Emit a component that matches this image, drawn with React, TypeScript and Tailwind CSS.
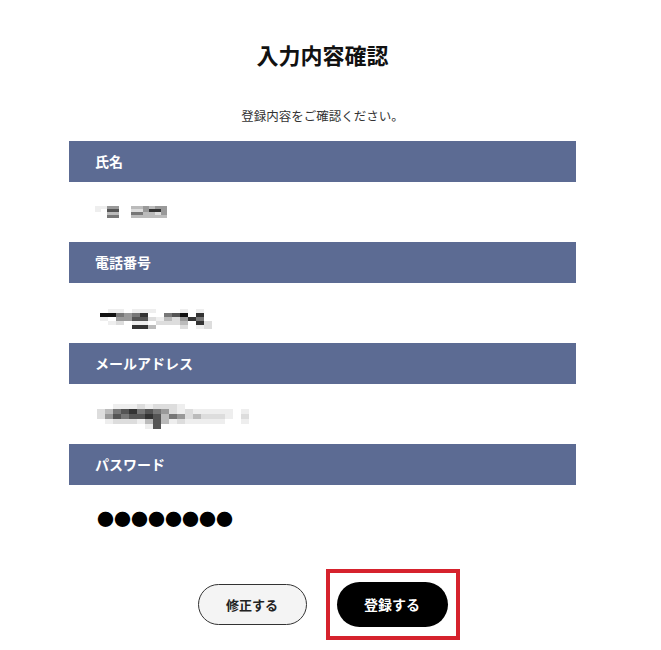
import React from "react";

const shades: Record<string, string> = {
  "0": "#ffffff",
  "1": "#eeeeee",
  "2": "#dddddd",
  "3": "#bbbbbb",
  "4": "#999999",
  "5": "#777777",
  "6": "#555555",
  "7": "#333333",
  "8": "#111111",
};

function Mosaic({ rows, cw, ch }: { rows: string[]; cw: number; ch: number }) {
  return (
    <div className="flex flex-col">
      {rows.map((r, i) => (
        <div key={i} className="flex">
          {r.split("").map((c, j) => (
            <div key={j} style={{ width: cw, height: ch, background: shades[c] }} />
          ))}
        </div>
      ))}
    </div>
  );
}

function Bar({ label }: { label: string }) {
  return (
    <div className="h-[41px] bg-[#5c6b93] flex items-center pl-[26px] text-white text-[14px] font-bold">
      {label}
    </div>
  );
}

export default function App() {
  return (
    <div
      className="w-[645px] bg-white text-[#222]"
      style={{ fontFamily: '"Noto Sans CJK JP", "Noto Sans", sans-serif' }}
    >
      <div className="flex flex-col items-center pt-[39px]">
        <h1 className="text-[22px] font-bold leading-[30px] text-[#111]">入力内容確認</h1>
        <p className="mt-[38px] text-[12.5px] leading-[18px] text-[#333]">登録内容をご確認ください。</p>
      </div>
      <div className="w-[507px] ml-[69px] mt-[16px]">
        <Bar label="氏名" />
        <div className="h-[60px] flex items-center pl-[26px]">
          <Mosaic cw={6} ch={3} rows={["114400334344", "106600224774", "003300553324", "005500333333"]} />
        </div>
        <Bar label="電話番号" />
        <div className="h-[60px] flex items-start pt-[26px] pl-[31px]">
          <Mosaic
            cw={8}
            ch={4}
            rows={["01101110001010", "88545700568070", "10446621324750", "01201102223072", "00007730002012"]}
          />
        </div>
        <Bar label="メールアドレス" />
        <div className="h-[60px] flex items-start pt-[20px] pl-[28px]">
          <Mosaic
            cw={8}
            ch={5}
            rows={["0011121222100000000", "2356756542121111101", "2465667635423222102", "0122213631211111001", "0000001600000000000"]}
          />
        </div>
        <Bar label="パスワード" />
        <div className="h-[68px] flex items-center pl-[28px] text-[17px] text-black">
          ●●●●●●●●
        </div>
      </div>
      <div className="flex justify-center items-center gap-[30px] mt-[29px] pb-[20px]">
        <button className="w-[109px] h-[41px] rounded-full border border-[#333] bg-[#f4f4f4] text-[13px] font-bold text-[#222]">
          修正する
        </button>
        <div className="relative">
          <button className="w-[111px] h-[45px] rounded-full bg-black text-white text-[14px] font-bold">
            登録する
          </button>
          <div className="absolute left-[-11px] right-[-12px] top-[-13px] bottom-[-13px] border-[4px] border-[#d6222d]" />
        </div>
      </div>
    </div>
  );
}
